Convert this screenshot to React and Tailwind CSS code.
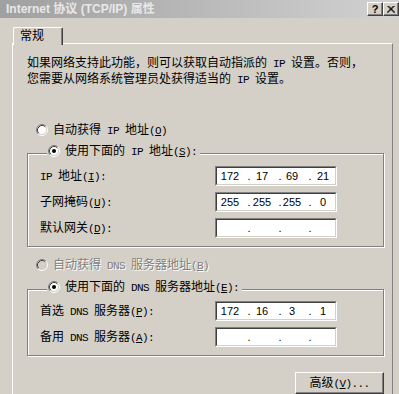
import React from "react";

const LAT = "font-['Liberation_Mono',monospace] text-[11px] tracking-[-0.6px]";

function Txt({ s }) {
  const out = [];
  let i = 0;
  let k = 0;
  let run = "";
  let runLatin = null;
  const flush = () => {
    if (run) {
      out.push(
        runLatin ? (
          <span key={k++} className={LAT}>{run}</span>
        ) : (
          <span key={k++}>{run}</span>
        )
      );
      run = "";
    }
  };
  while (i < s.length) {
    const ch = s[i];
    if (ch === "&") {
      flush();
      const c = s[i + 1];
      const lat = c.charCodeAt(0) < 0x2000;
      out.push(
        <span key={k++} className={lat ? LAT + " underline underline-offset-[1px]" : "underline underline-offset-[1px]"}>
          {c}
        </span>
      );
      i += 2;
      runLatin = null;
      continue;
    }
    const lat = ch.charCodeAt(0) < 0x2000;
    if (runLatin !== null && lat !== runLatin) flush();
    runLatin = lat;
    run += ch;
    i++;
  }
  flush();
  return <span className="whitespace-pre">{out}</span>;
}

function Radio({ checked, disabled }) {
  return (
    <svg width="12" height="12" viewBox="0 0 12 12" className="shrink-0">
      <circle cx="6" cy="6" r="4.5" fill={disabled ? "#d4d0c8" : "#ffffff"} />
      <path d="M2.11 9.89 A5.5 5.5 0 0 1 9.89 2.11" stroke="#808080" fill="none" />
      <path d="M9.89 2.11 A5.5 5.5 0 0 1 2.11 9.89" stroke="#ffffff" fill="none" />
      <path d="M2.82 9.18 A4.5 4.5 0 0 1 9.18 2.82" stroke="#404040" fill="none" />
      <path d="M9.18 2.82 A4.5 4.5 0 0 1 2.82 9.18" stroke="#d4d0c8" fill="none" />
      {checked && <circle cx="6" cy="6" r="2" fill={disabled ? "#808080" : "#000000"} />}
    </svg>
  );
}

function IpBox({ v }) {
  return (
    <div className="w-[122px] h-[20px] border border-t-[#808080] border-l-[#808080] border-b-white border-r-white">
      <div className="h-full border border-t-[#404040] border-l-[#404040] border-b-[#d4d0c8] border-r-[#d4d0c8] bg-white flex items-center font-['Liberation_Sans',sans-serif] text-[11px] text-black whitespace-nowrap">
        <span className="w-0 ml-[13px] flex justify-center">{v[0]}</span>
        <span className="w-0 ml-[19px] flex justify-center">.</span>
        <span className="w-0 ml-[13px] flex justify-center">{v[1]}</span>
        <span className="w-0 ml-[18px] flex justify-center">.</span>
        <span className="w-0 ml-[12px] flex justify-center">{v[2]}</span>
        <span className="w-0 ml-[18px] flex justify-center">.</span>
        <span className="w-0 ml-[13px] flex justify-center">{v[3]}</span>
      </div>
    </div>
  );
}

function Row({ label, v, first }) {
  return (
    <div className={"flex items-center h-[20px] " + (first ? "" : "mt-[6px]")}>
      <div className="w-[175px] leading-[12px]">
        <Txt s={label} />
      </div>
      <IpBox v={v} />
    </div>
  );
}

function Legend({ text }) {
  return (
    <div className="-mt-[9px] ml-[7px] pl-[1px] pr-[3px] w-fit bg-[#d4d0c8] flex items-center gap-[5px] h-[12px] leading-[12px]">
      <Radio checked />
      <Txt s={text} />
    </div>
  );
}

export default function App() {
  return (
    <div className="w-[399px] h-[394px] overflow-hidden bg-[#d4d0c8] flex flex-col font-['Noto_Sans_CJK_SC',sans-serif] text-[12px] text-black">
      {/* Title bar */}
      <div className="h-[18px] shrink-0 flex items-center bg-gradient-to-r from-[#a0a0a0] to-[#d2d2d2] pl-[6px]">
        <div className="font-['Liberation_Sans','Noto_Sans_CJK_SC',sans-serif] font-bold text-[12px] text-[#e8e8e8] leading-[18px] whitespace-pre">
          Internet 协议 (TCP/IP) 属性
        </div>
        <div className="ml-auto flex items-center">
          <div className="w-[16px] h-[14px] bg-[#d4d0c8] border border-t-white border-l-white border-b-[#404040] border-r-[#404040] shadow-[inset_-1px_-1px_0_#808080] flex items-center justify-center font-['Liberation_Sans',sans-serif] font-bold text-[11px] leading-none">
            ?
          </div>
          <div className="w-[16px] h-[14px] bg-[#d4d0c8] border border-t-white border-l-white border-b-[#404040] border-r-[#404040] shadow-[inset_-1px_-1px_0_#808080] flex items-center justify-center">
            <svg width="8" height="7" viewBox="0 0 8 7">
              <path d="M0.5 0 L7.5 7 M1.5 0 L8 6.5 M7.5 0 L0.5 7 M6.5 0 L0 6.5" stroke="#000" strokeWidth="1" fill="none" />
            </svg>
          </div>
        </div>
      </div>

      {/* Tab */}
      <div className="mt-[9px] pl-[13px] flex">
        <div className="relative z-10 w-[50px] h-[18px] bg-[#d4d0c8] border-t border-l border-t-white border-l-white border-r border-r-[#404040] rounded-tl-[2px] rounded-tr-[2px] shadow-[inset_-1px_0_0_#808080] pl-[6px] leading-[12px] pt-[1px]">
          常规
        </div>
      </div>

      {/* Panel */}
      <div className="-mt-[2px] ml-[12px] w-[381px] flex-1 border-t border-l border-t-white border-l-white border-r border-r-[#808080] pl-[14px] pr-[8px] pt-[11px] flex flex-col">
        <div className="leading-[13px]">
          <div><Txt s="如果网络支持此功能，则可以获取自动指派的 IP 设置。否则，" /></div>
          <div><Txt s="您需要从网络系统管理员处获得适当的 IP 设置。" /></div>
        </div>

        <div className="mt-[37px] ml-[9px] flex items-center gap-[5px] h-[12px] leading-[12px]">
          <Radio />
          <Txt s="自动获得 IP 地址(&O)" />
        </div>

        <div className="mt-[17px] border border-[#808080] shadow-[inset_1px_1px_0_#fff,1px_1px_0_#fff] pl-[12px] pb-[8px]">
          <Legend text="使用下面的 IP 地址(&S):" />
          <div className="mt-[9px]">
            <Row first label="IP 地址(&I):" v={["172", "17", "69", "21"]} />
            <Row label="子网掩码(&U):" v={["255", "255", "255", "0"]} />
            <Row label="默认网关(&D):" v={["", "", "", ""]} />
          </div>
        </div>

        <div className="mt-[12px] ml-[9px] flex items-center gap-[5px] h-[12px] leading-[12px] text-[#808080] [text-shadow:1px_1px_0_#fff]">
          <Radio disabled />
          <Txt s="自动获得 DNS 服务器地址(&B)" />
        </div>

        <div className="mt-[18px] border border-[#808080] shadow-[inset_1px_1px_0_#fff,1px_1px_0_#fff] pl-[12px] pb-[8px]">
          <Legend text="使用下面的 DNS 服务器地址(&E):" />
          <div className="mt-[8px]">
            <Row first label="首选 DNS 服务器(&P):" v={["172", "16", "3", "1"]} />
            <Row label="备用 DNS 服务器(&A):" v={["", "", "", ""]} />
          </div>
        </div>

        <div className="mt-[16px] flex justify-end">
          <div className="w-[89px] h-[22px] border border-t-white border-l-white border-b-[#404040] border-r-[#404040] shadow-[inset_-1px_-1px_0_#808080] flex items-center justify-center leading-[12px]">
            <Txt s="高级(&V)..." />
          </div>
        </div>
      </div>
    </div>
  );
}
